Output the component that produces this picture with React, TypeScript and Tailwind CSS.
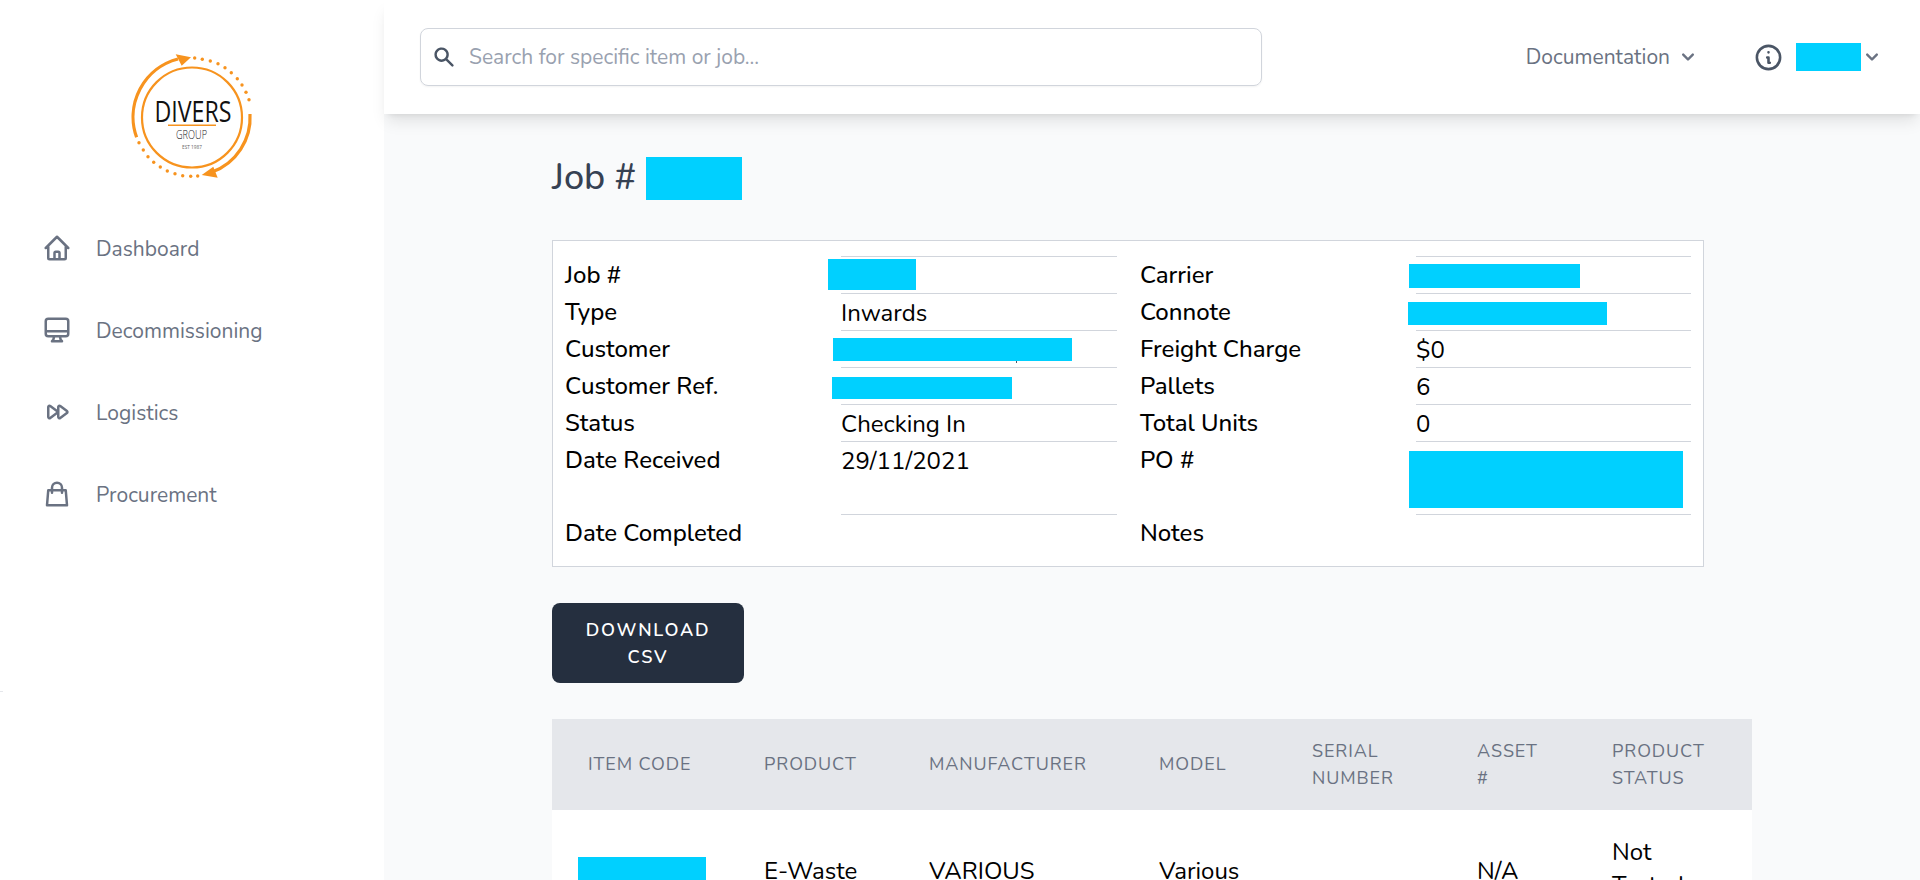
import React from "react";

const fontFamily = "font-['Nunito','Lato','Open_Sans',sans-serif]";

// Cyan boxes that hide customer data in the screenshot
const Mask = ({ className }: { className: string }) => (
  <div className={`absolute bg-[#00d0ff] ${className}`} />
);

const Logo = () => (
  <svg viewBox="130 50 125 132" className="w-[125px] h-[132px]" fill="none">
    <path d="M136.6 137.3 A60 60 0 0 1 178 59" stroke="#f7931e" strokeWidth="3.2" />
    <path d="M175.7 54.3 L181.7 65.7 L191 57.3 Z" fill="#f7931e" />
    <path d="M250 114 A58 58 0 0 1 212 172" stroke="#f7931e" strokeWidth="3.2" />
    <path d="M213.3 166.7 L217.7 177.7 L201.7 175 Z" fill="#f7931e" />
    <circle cx="192" cy="117.5" r="50" stroke="#f7931e" strokeWidth="2.2" />
    {[
      [194.7, 58], [202.3, 59.3], [210.3, 61], [218, 63.7], [225, 67.7], [231.3, 72.7],
      [237.3, 78.7], [242, 85], [246, 92.3], [249, 99.7],
      [139, 142.7], [143.3, 150], [148, 156.7], [153.7, 162.3], [160.3, 167], [167.3, 171],
      [175, 173.7], [182.7, 175.7], [190.7, 176.3], [197.7, 176],
    ].map(([cx, cy]) => (
      <circle key={`${cx}-${cy}`} cx={cx} cy={cy} r="1.7" fill="#f7931e" />
    ))}
    <text x="154.5" y="121.7" fontSize="30" fill="#111" textLength="77" lengthAdjust="spacingAndGlyphs" fontFamily="Open Sans, sans-serif">
      DIVERS
    </text>
    <rect x="168" y="124.5" width="48" height="1.5" fill="#f7931e" />
    <text x="176" y="138.5" fontSize="13.5" fontWeight="300" fill="#222" textLength="31" lengthAdjust="spacingAndGlyphs" fontFamily="Open Sans, sans-serif">
      GROUP
    </text>
    <text x="182" y="148.7" fontSize="6" fill="#666" textLength="20" lengthAdjust="spacingAndGlyphs" fontFamily="Open Sans, sans-serif">
      EST 1987
    </text>
  </svg>
);

const navItems = [
  {
    label: "Dashboard",
    d: "M3 12l2-2m0 0l7-7 7 7M5 10v10a1 1 0 001 1h3m10-11l2 2m-2-2v10a1 1 0 01-1 1h-3m-6 0a1 1 0 001-1v-4a1 1 0 011-1h2a1 1 0 011 1v4a1 1 0 001 1m-6 0h6",
  },
  {
    label: "Decommissioning",
    d: "M9.75 17L9 20l-1 1h8l-1-1-.75-3M3 13h18M5 17h14a2 2 0 002-2V5a2 2 0 00-2-2H5a2 2 0 00-2 2v10a2 2 0 002 2z",
  },
  {
    label: "Logistics",
    d: "M11.933 12.8a1 1 0 000-1.6L6.6 7.2A1 1 0 005 8v8a1 1 0 001.6.8l5.333-4zM19.933 12.8a1 1 0 000-1.6l-5.333-4A1 1 0 0013 8v8a1 1 0 001.6.8l5.333-4z",
  },
  { label: "Procurement", d: "M16 11V7a4 4 0 00-8 0v4M5 9h14l1 12H4L5 9z" },
];

const Chevron = ({ className }: { className: string }) => (
  <svg viewBox="0 0 20 20" fill="currentColor" className={className}>
    <path
      fillRule="evenodd"
      clipRule="evenodd"
      d="M5.293 7.293a1 1 0 011.414 0L10 10.586l3.293-3.293a1 1 0 111.414 1.414l-4 4a1 1 0 01-1.414 0l-4-4a1 1 0 010-1.414z"
    />
  </svg>
);

type InfoRow = { label: string; value?: string; mask?: string; tall?: boolean; speck?: boolean };

const leftRows: InfoRow[] = [
  { label: "Job #", mask: "left-[-13px] top-[2px] w-[88px] h-[31px]" },
  { label: "Type", value: "Inwards" },
  { label: "Customer", mask: "left-[-8px] top-[7px] w-[239px] h-[23px]", speck: true },
  { label: "Customer Ref.", mask: "left-[-9px] top-[9px] w-[180px] h-[22px]" },
  { label: "Status", value: "Checking In" },
  { label: "Date Received", value: "29/11/2021", tall: true },
  { label: "Date Completed" },
];

const rightRows: InfoRow[] = [
  { label: "Carrier", mask: "left-[-7px] top-[7px] w-[171px] h-[24px]" },
  { label: "Connote", mask: "left-[-8px] top-[8px] w-[199px] h-[23px]" },
  { label: "Freight Charge", value: "$0" },
  { label: "Pallets", value: "6" },
  { label: "Total Units", value: "0" },
  { label: "PO #", mask: "left-[-7px] top-[9px] w-[274px] h-[57px]", tall: true },
  { label: "Notes" },
];

const InfoColumn = ({ rows, width }: { rows: InfoRow[]; width: string }) => (
  <div className={width}>
    {rows.map((row) => (
      <div key={row.label} className={`flex ${row.tall ? "h-[73px]" : "h-[37px]"}`}>
        <div className="w-[276px] shrink-0 font-[550] leading-[38px]">{row.label}</div>
        <div className="relative flex-1 border-t border-gray-300 leading-[38px]">
          {row.value}
          {row.mask && <Mask className={row.mask} />}
          {/* tail of a comma that pokes out under the customer mask */}
          {row.speck && <div className="absolute left-[175px] top-[30px] w-px h-[2px] bg-gray-600" />}
        </div>
      </div>
    ))}
  </div>
);

const App = () => {
  return (
    <div className={`relative flex h-[880px] overflow-hidden bg-white ${fontFamily}`}>
      <aside className="w-[384px] shrink-0 bg-white flex flex-col">
        <div className="pt-[50px] flex justify-center">
          <Logo />
        </div>
        <nav className="mt-[25px]">
          {navItems.map((item) => (
            <div key={item.label} className="h-[82px] flex items-center pl-[42px] text-[21px] text-gray-500">
              <svg viewBox="0 0 24 24" fill="none" stroke="currentColor" strokeWidth="2" strokeLinecap="round" strokeLinejoin="round" className="w-[30px] h-[30px] shrink-0">
                <path d={item.d} />
              </svg>
              <span className="ml-[24px] pt-[3px]">{item.label}</span>
            </div>
          ))}
        </nav>
        <div className="absolute left-0 top-[691px] w-[3px] h-px bg-gray-200" />
      </aside>

      <div className="flex-1 min-w-0 flex flex-col bg-gray-50">
        <header className="relative z-10 h-[114px] shrink-0 bg-white shadow-lg flex items-center justify-between px-9">
          <div className="relative w-[842px] h-[58px] rounded-lg border border-gray-300 shadow-xs flex items-center pl-[11px]">
            <svg viewBox="0 0 20 20" fill="currentColor" className="w-6 h-6 text-gray-600 shrink-0">
              <path
                fillRule="evenodd"
                clipRule="evenodd"
                d="M8 4a4 4 0 100 8 4 4 0 000-8zM2 8a6 6 0 1110.89 3.476l4.817 4.817a1 1 0 01-1.414 1.414l-4.816-4.816A6 6 0 012 8z"
              />
            </svg>
            <span className="ml-[13px] pt-[2px] text-[21px] text-gray-400">Search for specific item or job...</span>
          </div>
          <div className="flex items-center text-gray-500">
            <span className="text-[21px] pt-[2px]">Documentation</span>
            <Chevron className="w-6 h-6 ml-[6px]" />
            <svg viewBox="0 0 24 24" fill="none" stroke="currentColor" strokeWidth="2" strokeLinecap="round" strokeLinejoin="round" className="w-[31px] h-[31px] ml-[53px] text-gray-600">
              <path d="M13 16h-1v-4h-1m1-4h.01M21 12a9 9 0 11-18 0 9 9 0 0118 0z" />
            </svg>
            <div className="w-[65px] h-[28px] ml-[12px] bg-[#00d0ff]" />
            <Chevron className="w-6 h-6 -ml-px" />
          </div>
        </header>

        <main className="flex-1 min-h-0 pl-[168px] pt-[43px]">
          <div className="relative h-[44px] flex items-center">
            <h1 className="text-[36px] font-medium text-gray-700 pb-[2px]">Job #</h1>
            <Mask className="left-[94px] top-0 w-[96px] h-[43px]" />
          </div>

          <div className="mt-[39px] w-[1152px] h-[327px] border border-gray-300 bg-white pl-3 pt-[15px] flex gap-[23px] text-[24px] text-black">
            <InfoColumn rows={leftRows} width="w-[552px]" />
            <InfoColumn rows={rightRows} width="w-[551px]" />
          </div>

          <button className="mt-9 w-[192px] h-[80px] block rounded-lg bg-[#252f3f] text-white text-[18px] font-semibold tracking-widest leading-[27px] px-6 pt-[2px]">
            DOWNLOAD CSV
          </button>

          <table className="mt-9 w-[1200px] table-fixed bg-white">
            <colgroup>
              <col className="w-[176px]" />
              <col className="w-[165px]" />
              <col className="w-[230px]" />
              <col className="w-[153px]" />
              <col className="w-[165px]" />
              <col className="w-[135px]" />
              <col className="w-[176px]" />
            </colgroup>
            <thead className="bg-gray-200 text-[18px] text-gray-500 tracking-wider leading-[27px]">
              <tr className="h-[91px] text-left">
                <th className="pl-9 font-normal">ITEM CODE</th>
                <th className="pl-9 font-normal">PRODUCT</th>
                <th className="pl-9 font-normal">MANUFACTURER</th>
                <th className="pl-9 font-normal">MODEL</th>
                <th className="pl-9 pr-6 font-normal">SERIAL NUMBER</th>
                <th className="pl-9 pr-6 font-normal">
                  ASSET
                  <br />#
                </th>
                <th className="pl-9 pr-6 font-normal">PRODUCT STATUS</th>
              </tr>
            </thead>
            <tbody className="text-[24px] text-black leading-[33px]">
              <tr>
                <td className="pl-[26px] pt-[26px] pb-[26px]">
                  <div className="w-[128px] h-[26px] bg-[#00d0ff]" />
                </td>
                <td className="pl-9 pt-[28px] pb-[25px]">E-Waste</td>
                <td className="pl-9 pt-[28px] pb-[25px]">VARIOUS</td>
                <td className="pl-9 pt-[28px] pb-[25px]">Various</td>
                <td className="pl-9 pt-[28px] pb-[25px]"></td>
                <td className="pl-9 pt-[28px] pb-[25px]">N/A</td>
                <td className="pl-9 pr-6 pt-[26px] pb-[27px]">
                  Not
                  <br />
                  Tested
                </td>
              </tr>
            </tbody>
          </table>
        </main>
      </div>
    </div>
  );
};

export default App;
